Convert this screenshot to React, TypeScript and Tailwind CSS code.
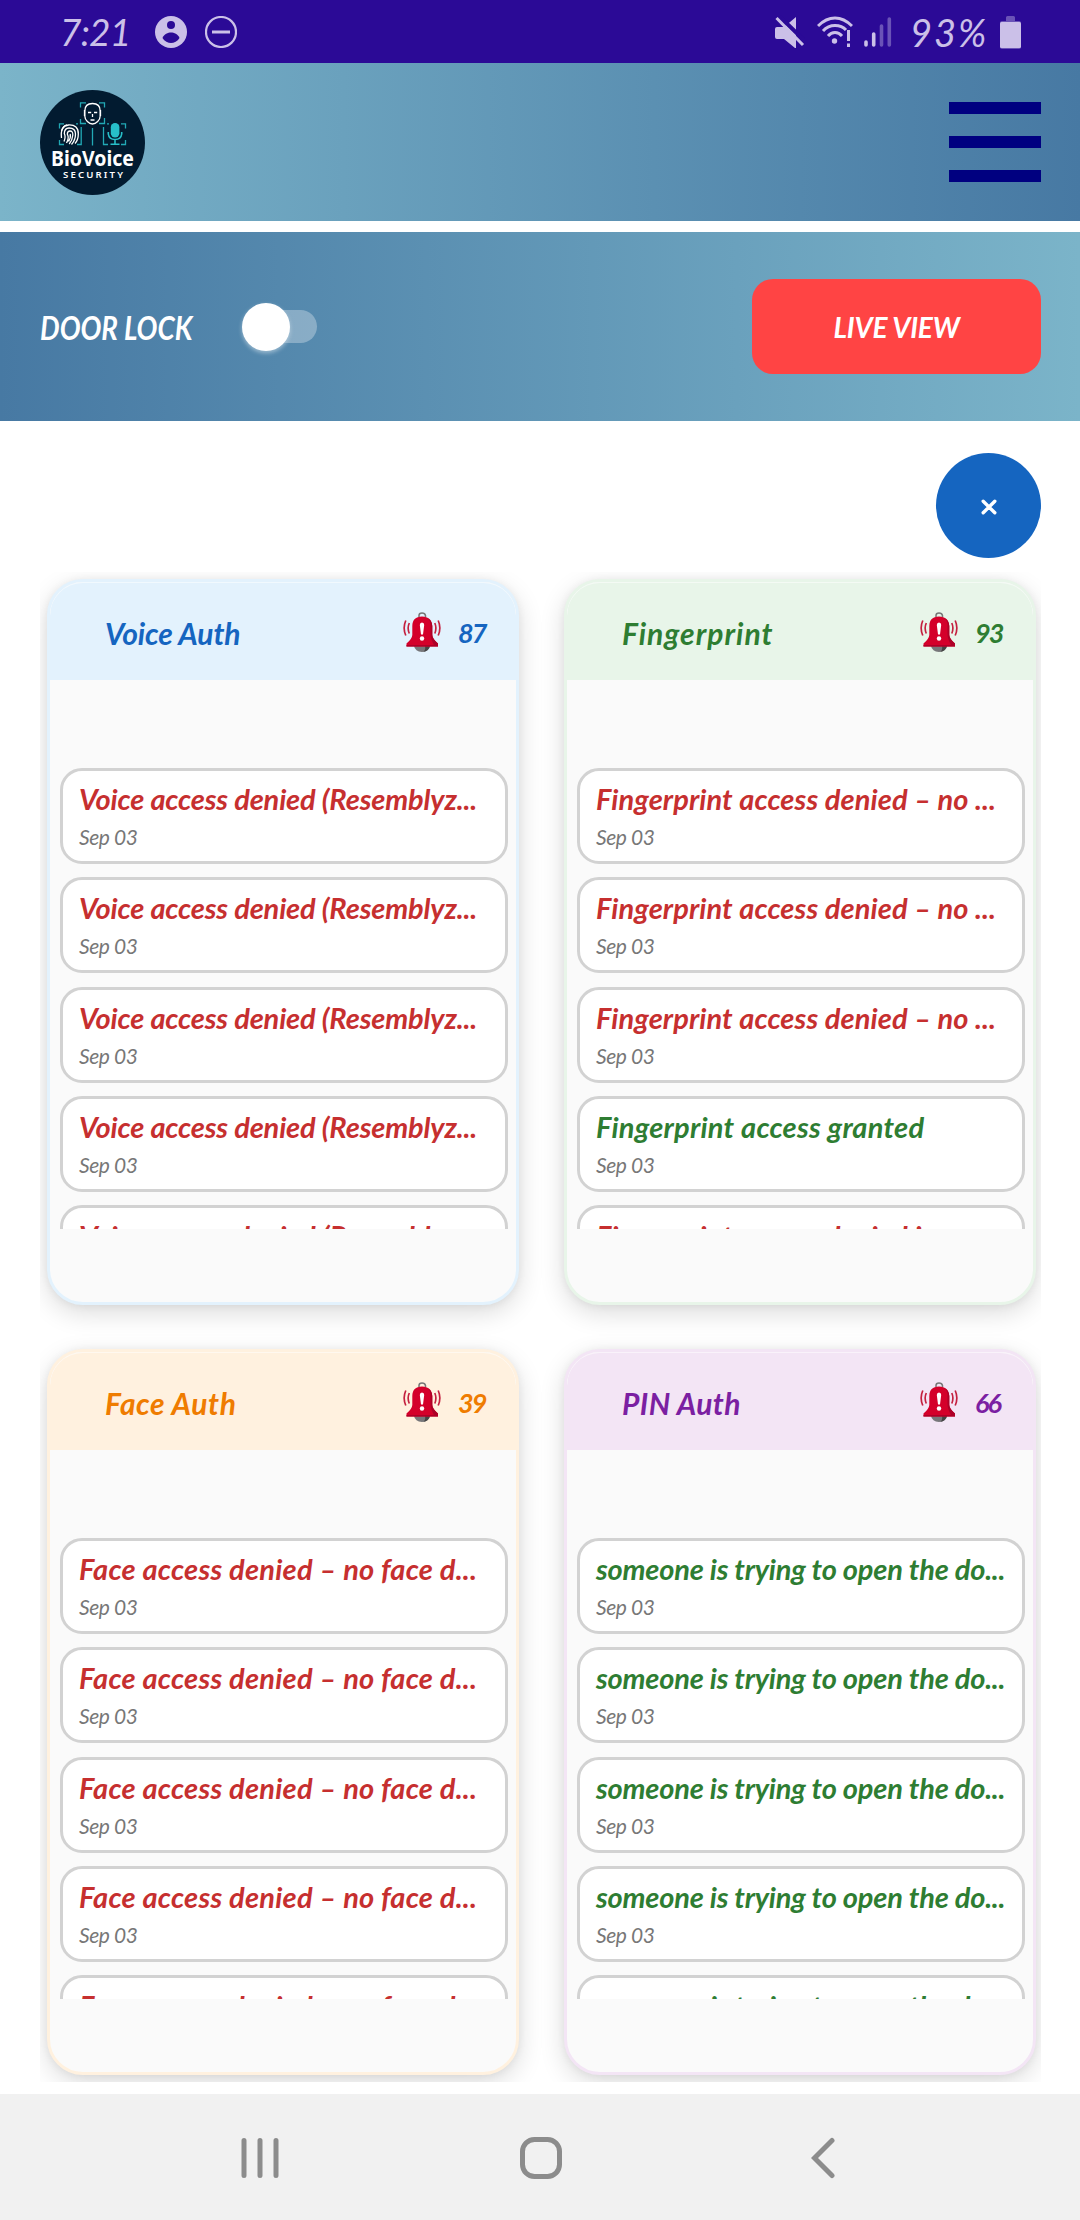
type Entry = { text: string; tone: "red" | "green"; tracking: string };

type Panel = {
  title: string;
  titleTracking: string;
  count: number;
  edge: string;
  head: string;
  ink: string;
  entries: Entry[];
};

const voice: Entry = { text: "Voice access denied (Resemblyz...", tone: "red", tracking: "tracking-[-0.150px]" };
const finger: Entry = { text: "Fingerprint access denied – no ...", tone: "red", tracking: "tracking-[0.1px]" };
const granted: Entry = { text: "Fingerprint access granted", tone: "green", tracking: "tracking-[0.25px]" };
const fingerLast: Entry = { text: "Fingerprint access denied in...", tone: "red", tracking: "tracking-[0.1px]" };
const face: Entry = { text: "Face access denied – no face d...", tone: "red", tracking: "tracking-[0.25px]" };
const pin: Entry = { text: "someone is trying to open the do...", tone: "green", tracking: "tracking-[-0.2px]" };

const panels: Panel[] = [
  {
    title: "Voice Auth",
    titleTracking: "tracking-[-0.1px]",
    count: 87,
    edge: "border-[#e3f2fd]",
    head: "bg-[#e3f2fd]",
    ink: "text-[#1565c0]",
    entries: [voice, voice, voice, voice, voice],
  },
  {
    title: "Fingerprint",
    titleTracking: "tracking-[1px]",
    count: 93,
    edge: "border-[#e8f5e9]",
    head: "bg-[#e8f5e9]",
    ink: "text-[#2e7d32]",
    entries: [finger, finger, finger, granted, fingerLast],
  },
  {
    title: "Face Auth",
    titleTracking: "tracking-[0.6px]",
    count: 39,
    edge: "border-[#fff1df]",
    head: "bg-[#fff1df]",
    ink: "text-[#ef7c00]",
    entries: [face, face, face, face, face],
  },
  {
    title: "PIN Auth",
    titleTracking: "tracking-[0.4px]",
    count: 66,
    edge: "border-[#f3e5f5]",
    head: "bg-[#f3e5f5]",
    ink: "text-[#7b1fa2]",
    entries: [pin, pin, pin, pin, pin],
  },
];

function StatusBar() {
  return (
    <div className="flex h-[63px] shrink-0 items-center justify-between bg-[#2b0a96] pr-[59px] pl-[60px] text-[#cbc0e8]">
      <div className="flex items-center">
        <span className="w-[95px] text-[37px] leading-[40px] tracking-[-0.8px]">7:21</span>
        <svg className="h-8 w-8" viewBox="0 0 32 32">
          <circle cx="16" cy="16" r="16" fill="currentColor" />
          <circle cx="16" cy="9" r="4" fill="#2b0a96" />
          <path d="M7.500 22C9 18 13 16.500 16 16.500S23 18 24.500 22C22.500 25.500 19 27 16 27S9.500 25.500 7.500 22Z" fill="#2b0a96" />
        </svg>
        <svg className="ml-[18px] h-8 w-8" viewBox="0 0 32 32" fill="none" stroke="currentColor">
          <circle cx="16" cy="16" r="15" strokeWidth="2.200" />
          <path d="M7 16h18" strokeWidth="3" />
        </svg>
      </div>
      <div className="flex items-center">
        <svg className="h-[34px] w-[30px]" viewBox="0 0 30 34">
          <path d="M2 12h7L21 2v31h-1L9 24H2q-2 0-2-2v-8q0-2 2-2Z" fill="currentColor" />
          <path d="M4.500 1.500L31 27" stroke="#2b0a96" strokeWidth="4" />
          <path d="M1.500 3L28 30" stroke="currentColor" strokeWidth="3" />
        </svg>
        <svg className="ml-[12px] h-[32px] w-[36px]" viewBox="0 0 36 32" fill="none" stroke="currentColor" strokeWidth="3">
          <path d="M1 10Q9 2 18 2T35 10M6 15Q11 9.500 18 9.500T29 14M11 20Q14 16.500 18 16.500T25 20" />
          <circle cx="17.500" cy="25" r="2.700" fill="currentColor" stroke="none" />
          <path d="M31.500 14V25M31.500 27.500V31" />
        </svg>
        <svg className="ml-[11px] h-[32px] w-[28px]" viewBox="0 0 28 32" fill="none" stroke="currentColor" strokeWidth="3.600" strokeLinecap="round">
          <path d="M2 26V29M9.700 18V29" />
          <path d="M17.500 10V29M25.300 3V29" opacity="0.4" />
        </svg>
        <span className="ml-[18px] w-[89px] text-[38px] leading-[40px] tracking-[2px]">93%</span>
        <svg className="ml-[1px] h-[34px] w-[21px]" viewBox="0 0 21 34" fill="currentColor">
          <path d="M6 6V2.500Q6 1 7.500 1h6Q15 1 15 2.500V6h4q2 0 2 2v24q0 2-2 2H2q-2 0-2-2V8q0-2 2-2Z" opacity="0.4" />
          <rect y="7" width="21" height="26" rx="1.500" />
        </svg>
      </div>
    </div>
  );
}

function Logo() {
  return (
    <svg className="h-[105px] w-[105px] not-italic" viewBox="0 0 105 105">
      <circle cx="52.500" cy="52.500" r="52.500" fill="#021b30" />
      <g fill="none" stroke="#22a9b5" strokeWidth="1.300">
        <path d="M40.500 17.500V12.800H46M59 12.800H64.500V17.500M40.500 29V33.500H46M59 33.500H64.500V28" />
        <path d="M19.500 38.500V33.800H24M19.500 50V54.500H24M36 33.800H38M37 54.500H41.200V37M52.500 38V55.500M63.500 37V54.500H68M67 33.800H69M81 33.800H85.500V38.500M85.500 50V54.500H81" />
      </g>
      <g fill="none" stroke="#fff" strokeWidth="1.300">
        <path d="M52.500 13.500C47 13.500 44.800 17 44.800 21V26C44.800 30 49 34 52.500 34S60.200 30 60.200 26V21C60.200 17 58 13.500 52.500 13.500Z" />
        <path d="M44.500 20V26M60.500 20V26M48 22.500h3.200M54 22.500h3.200M52.500 24v3M50.500 30h4" />
        <path d="M21.500 48Q20 36 28.500 35Q38.500 34.500 38.300 44Q38.300 50 35 53.500M24 51.500Q26 47 24.300 43.500Q24.500 38 29 38Q35.500 38 35.500 44Q35.500 50 31.500 54.500M26.500 53Q29.500 48 27.300 44Q27.500 41 30 41Q33 41 32.800 45Q32.500 50 29.200 54M30.200 44Q31 48 28.500 51.500" />
        <path d="M21.500 41Q23 35.500 27 34.800" />
      </g>
      <rect x="70.800" y="33" width="8.600" height="14.500" rx="4.200" fill="#27bfc9" />
      <path d="M68.300 42V44Q69 49.500 75 49.500T81.700 44V42M75 49.500V54M70.500 54.300h9" fill="none" stroke="#27bfc9" strokeWidth="1.600" />
      <text x="11" y="76" textLength="83" lengthAdjust="spacingAndGlyphs" fill="#fff" fontFamily="Noto Sans, sans-serif" fontWeight="700" fontSize="20.500">
        BioVoice
      </text>
      <text x="23" y="88" textLength="60" fill="#fff" fontFamily="Noto Sans, sans-serif" fontWeight="600" fontSize="9.600">
        SECURITY
      </text>
    </svg>
  );
}

function Header() {
  return (
    <header className="flex h-[158px] shrink-0 items-center justify-between bg-linear-to-r from-[#7bb4c9] to-[#4779a3] pr-[39px] pl-10">
      <Logo />
      <div className="flex w-[92px] flex-col gap-[22px]">
        <span className="h-3 bg-[#000080]" />
        <span className="h-3 bg-[#000080]" />
        <span className="h-3 bg-[#000080]" />
      </div>
    </header>
  );
}

function DoorBar() {
  return (
    <section className="mt-[11px] flex h-[189px] shrink-0 items-center justify-between bg-linear-to-r from-[#4779a3] to-[#7bb4c9] pr-[39px] pl-10 text-white">
      <div className="flex items-center">
        <div className="w-[202px]">
          <span className="inline-block origin-left scale-x-[0.84] text-[33px] leading-10 font-bold whitespace-nowrap">DOOR LOCK</span>
        </div>
        <div className="flex h-[33px] w-[75px] items-center rounded-full bg-linear-to-r from-transparent from-10% to-white/30 to-10%">
          <span className="h-12 w-12 rounded-full bg-white shadow-[0_2px_4px_rgba(210,225,235,0.6)]" />
        </div>
      </div>
      <button className="flex h-[95px] w-[289px] items-center justify-center rounded-[21px] bg-[#ff4444] text-[28px] font-bold tracking-[-0.2px]">
        LIVE VIEW
      </button>
    </section>
  );
}

function AlarmBell() {
  return (
    <svg className="mt-[1px] h-10 w-[38px]" viewBox="0 0 38 40">
      <path d="M16 5V3.500Q16 1 19 1T22.500 3.500V5" fill="none" stroke="#777" strokeWidth="1.500" />
      <path d="M11 34h16q-1 5.500-8 6q-7-.5-8-6Z" fill="#77777a" />
      <path d="M22 34h5q-1 5-7 6q3-2 2-6Z" fill="#444" />
      <path d="M19 4.500C12.500 4.500 9.500 8 9.300 14V23Q9 27 3.500 31.500V34.500H35V31.500Q29.500 27 29.300 23V14C29 8 25.500 4.500 19 4.500Z" fill="#d4002a" />
      <path d="M24 6Q29 8 29.300 14V23Q29.500 27 35 31.500V34.500H3.500V33H31Q27.500 27 27.500 22V13Q27.500 8 24 6Z" fill="#ad0027" />
      <path d="M19 10.500q2.300 0 2.200 2.500L20 22.500h-2L16.800 13q0-2.500 2.200-2.500Z" fill="#fff" />
      <circle cx="19" cy="26.500" r="2.200" fill="#fff" />
      <path d="M2.800 8.500Q-.5 16 2.800 23.500M6.300 11Q4 16 6.300 21.500M35.200 8.500Q38.500 16 35.200 23.500M31.800 11Q34 16 31.800 21.500" fill="none" stroke="#c4203f" strokeWidth="1.700" />
    </svg>
  );
}

function EntryCard({ entry }: { entry: Entry }) {
  return (
    <li className="h-24 shrink-0 rounded-[22px] border-3 border-[#d2d2d2] bg-white pt-[10px] pl-4 whitespace-nowrap">
      <p className={`text-[29px] leading-9 font-bold ${entry.tracking} ${entry.tone === "red" ? "text-[#c62f2f]" : "text-[#2e7d32]"}`}>{entry.text}</p>
      <p className="mt-[7px] text-[21px] leading-[26px] tracking-[-0.4px] text-[#777]">Sep 03</p>
    </li>
  );
}

function AuthPanel({ panel }: { panel: Panel }) {
  return (
    <article
      className={`flex h-[726px] flex-col overflow-hidden rounded-[36px] border-3 bg-[#fafafa] shadow-[0_8px_26px_rgba(0,0,0,0.14),0_1px_8px_rgba(0,0,0,0.06)] ${panel.edge}`}
    >
      <div className={`flex h-[98px] shrink-0 items-center rounded-t-[33px] pr-[32px] pl-[55px] shadow-[inset_0_1px_0_rgba(255,255,255,0.5)] ${panel.head} ${panel.ink}`}>
        <h2 className={`grow pt-[3px] text-[30px] leading-10 font-bold ${panel.titleTracking}`}>{panel.title}</h2>
        <AlarmBell />
        <span className="ml-[17px] w-[26px] pt-[3px] text-[27px] leading-10 font-bold tracking-[-2px]">{panel.count}</span>
      </div>
      <ul className="mt-[88px] mr-2 ml-[10px] flex h-[461px] shrink-0 flex-col gap-[13.300px] overflow-hidden">
        {panel.entries.map((entry, i) => (
          <EntryCard key={i} entry={entry} />
        ))}
      </ul>
    </article>
  );
}

function NavBar() {
  return (
    <nav className="flex h-[126px] shrink-0 items-center bg-[#f1f1f1] pt-[1px] pl-[241px] text-[#8c8c8c]">
      <svg className="h-[42px] w-[38px]" viewBox="0 0 38 42" fill="none" stroke="currentColor" strokeWidth="5" strokeLinecap="round">
        <path d="M3 3.500V38.500M19 3.500V38.500M35 3.500V38.500" />
      </svg>
      <svg className="ml-[241px] h-[42px] w-[42px]" viewBox="0 0 42 42" fill="none" stroke="currentColor" strokeWidth="5">
        <rect x="2.500" y="2.500" width="37" height="37" rx="12" />
      </svg>
      <svg className="ml-[249px] h-[42px] w-[24px]" viewBox="0 0 24 42" fill="none" stroke="currentColor" strokeWidth="5" strokeLinecap="round">
        <path d="M21 3.500L3.500 21L21 38.500" />
      </svg>
    </nav>
  );
}

export default function App() {
  return (
    <div className="flex h-[2220px] w-[1080px] flex-col overflow-hidden bg-white font-[Lato,sans-serif] italic">
      <StatusBar />
      <Header />
      <DoorBar />
      <div className="flex shrink-0 justify-end pt-8 pr-[39px] pb-[14px]">
        <button className="flex h-[105px] w-[105px] items-center justify-center rounded-full bg-[#1565c0]">
          <svg className="mt-[2px] h-4 w-4" viewBox="0 0 16 16" stroke="#fff" strokeWidth="3.400" strokeLinecap="round">
            <path d="M2.200 2.200L13.800 13.800M13.800 2.200L2.200 13.800" />
          </svg>
        </button>
      </div>
      <main className="mr-[39px] mb-3 ml-10 grid h-[1510px] shrink-0 grid-cols-2 content-start gap-x-[45px] gap-y-11 overflow-hidden pt-[7px] pr-[5px] pl-[7px]">
        {panels.map((panel) => (
          <AuthPanel key={panel.title} panel={panel} />
        ))}
      </main>
      <NavBar />
    </div>
  );
}
